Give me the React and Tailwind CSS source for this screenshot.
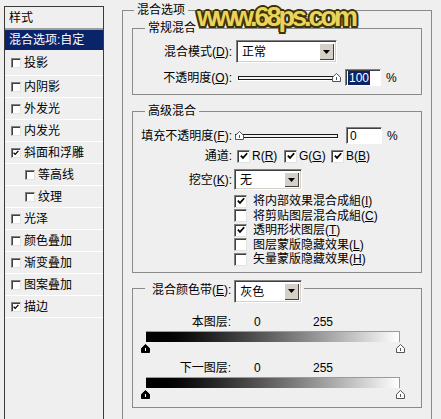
const FONT = "font-['Liberation_Sans','Noto_Sans_CJK_SC',sans-serif]";

const Check = ({ checked, small }) => (
  <span
    className={`inline-flex shrink-0 items-center justify-center bg-white border border-t-[#808080] border-l-[#808080] border-b-[#e2e2e2] border-r-[#e2e2e2] shadow-[inset_1px_1px_0_#404040] ${
      small ? "w-[10px] h-[10px]" : "w-[13px] h-[13px]"
    }`}
  >
    {checked && (
      <svg width={small ? 6 : 8} height={small ? 6 : 8} viewBox="0 0 8 8">
        <path d="M0.8 3.6 L3 5.9 L7.2 1.2" fill="none" stroke="#000" strokeWidth="1.7" />
      </svg>
    )}
  </span>
);

const U = ({ children }) => <span className="underline underline-offset-1">{children}</span>;

const DownArrow = () => (
  <svg width="7" height="4" viewBox="0 0 7 4">
    <path d="M0 0 H7 L3.5 4 Z" fill="#000" />
  </svg>
);

const Select = ({ value, w, h = "h-[23px]", extra = "" }) => (
  <div
    className={`flex shrink-0 ${w} ${h} ${extra} bg-white border border-t-[#808080] border-l-[#808080] border-b-white border-r-white shadow-[inset_1px_1px_0_#404040,inset_-1px_-1px_0_#d4d0c8]`}
  >
    <span className="flex-1 flex items-center pl-[5px] pt-[1px]">{value}</span>
    <span className="m-[2px] w-[15px] flex items-center justify-center bg-[#d4d0c8] shadow-[inset_1px_1px_0_#fff,inset_-1px_-1px_0_#404040]">
      <DownArrow />
    </span>
  </div>
);

const Thumb = ({ dark }) => (
  <svg width="9" height="9" viewBox="0 0 9 9">
    <path
      d="M4.5 0.5 L8.5 4.3 V8.5 H0.5 V4.3 Z"
      fill={dark ? "#000" : "#fff"}
      stroke={dark ? "#000" : "#555"}
      strokeWidth="1"
    />
    <path d="M4.5 4 V7" stroke={dark ? "#fff" : "#555"} strokeWidth="1" />
  </svg>
);

const Slider = ({ w, pos }) => (
  <div className={`relative ${w} h-[17px] flex items-center`}>
    <div className="w-full h-[4px] border border-[#1a1a1a] bg-[#f4f4f4] shadow-[0_1px_0_#fff]" />
    <span className="absolute top-[4px]" style={{ left: pos }}>
      <Thumb />
    </span>
  </div>
);

const NumBox = ({ children }) => (
  <div className="w-[36px] h-[17px] flex items-center pl-[2px] bg-white border border-t-[#808080] border-l-[#808080] border-b-white border-r-white shadow-[inset_1px_1px_0_#404040]">
    {children}
  </div>
);

const LeftRow = ({ label, checked, sub, first }) => (
  <div
    className={`flex items-center border-b border-white ${first ? "h-[26px]" : "h-[22px]"} ${
      sub ? "pl-[20px]" : "pl-[6px]"
    }`}
  >
    <Check small checked={checked} />
    <span className="ml-[3px]">{label}</span>
  </div>
);

const styles = [
  ["投影"],
  ["内阴影"],
  ["外发光"],
  ["内发光"],
  ["斜面和浮雕", true],
  ["等高线", false, true],
  ["纹理", false, true],
  ["光泽"],
  ["颜色叠加"],
  ["渐变叠加"],
  ["图案叠加"],
  ["描边", true],
];

const Bar = () => (
  <>
    <div className="mt-[2px] ml-[13px] w-[254px] h-[11px] bg-linear-to-r from-black to-white border-t border-r border-[#9a9a9a]" />
    <div className="mt-[2px] ml-[8px] w-[264px] h-[8px] flex justify-between">
      <Thumb dark />
      <Thumb />
    </div>
  </>
);

export default function App() {
  return (
    <div className={`relative w-[441px] h-[419px] overflow-hidden bg-[#efefef] flex items-start text-[12px] leading-[14px] text-black ${FONT}`}>
      {/* ── Style list ─────────────────────────── */}
      <div className="mt-[6px] ml-[4px] w-[100px] h-[430px] shrink-0 border border-[#3a3a3a] flex flex-col">
        <div className="h-[21px] flex items-center pl-[4px]">样式</div>
        <div className="h-[2px] bg-[#9d9d9d]" />
        <div className="h-[20px] flex items-center pl-[4px] bg-[#0a246a] text-white">混合选项:自定</div>
        {styles.map(([label, checked, sub], i) => (
          <LeftRow key={label} label={label} checked={checked} sub={sub} first={i === 0} />
        ))}
      </div>

      {/* ── Blending options ───────────────────── */}
      <fieldset className="ml-[18px] mt-[2px] w-[310px] h-[430px] shrink-0 border border-[#8a8a8a] pl-[9px]">
        <legend className="ml-[2px] px-[3px] leading-[16px]">混合选项</legend>

        {/* 常规混合 */}
        <fieldset className="mt-[2px] w-[290px] border border-[#8a8a8a] pb-[8px]">
          <legend className="ml-[12px] px-[3px] leading-[16px]">常规混合</legend>
          <div className="mt-[4px] h-[23px] flex items-center">
            <span className="w-[99px] text-right">混合模式(<U>D</U>):</span>
            <Select value="正常" w="w-[101px]" extra="ml-[4px]" />
          </div>
          <div className="mt-[6px] h-[17px] flex items-center">
            <span className="w-[99px] text-right">不透明度(<U>O</U>):</span>
            <div className="ml-[6px]">
              <Slider w="w-[100px]" pos={94} />
            </div>
            <div className="ml-[7px]">
              <NumBox>
                <span className="bg-[#0a246a] text-white px-[1px]">100</span>
              </NumBox>
            </div>
            <span className="ml-[5px]">%</span>
          </div>
        </fieldset>

        {/* 高级混合 */}
        <fieldset className="mt-[8px] w-[290px] border border-[#8a8a8a] pb-[5px]">
          <legend className="ml-[12px] px-[3px] leading-[16px]">高级混合</legend>
          <div className="mt-[8px] h-[17px] flex items-center">
            <span className="w-[99px] text-right whitespace-nowrap">填充不透明度(<U>F</U>):</span>
            <div className="ml-[3px]">
              <Slider w="w-[103px]" pos={0} />
            </div>
            <div className="ml-[8px]">
              <NumBox>
                <span className="px-[1px]">0</span>
              </NumBox>
            </div>
            <span className="ml-[5px]">%</span>
          </div>
          <div className="mt-[5px] h-[14px] flex items-center">
            <span className="w-[99px] text-right">通道:</span>
            <div className="ml-[5px] flex">
              {["R", "G", "B"].map((c) => (
                <span key={c} className="w-[47px] flex items-center">
                  <Check checked />
                  <span className="ml-[2px]">
                    {c}(<U>{c}</U>)
                  </span>
                </span>
              ))}
            </div>
          </div>
          <div className="mt-[6px] h-[21px] flex items-center">
            <span className="w-[99px] text-right">挖空(<U>K</U>):</span>
            <Select value="无" w="w-[68px]" h="h-[21px]" extra="ml-[2px]" />
          </div>
          <div className="mt-[4px] pl-[101px] flex flex-col">
            {[
              ["将内部效果混合成組", "I", true],
              ["将剪贴图层混合成組", "C", false],
              ["透明形状图层", "T", true],
              ["图层蒙版隐藏效果", "L", false],
              ["矢量蒙版隐藏效果", "H", false],
            ].map(([t, k, c]) => (
              <div key={k} className="h-[14.5px] flex items-center">
                <Check checked={c} />
                <span className="ml-[6px]">
                  {t}(<U>{k}</U>)
                </span>
              </div>
            ))}
          </div>
        </fieldset>

        {/* 混合颜色带 */}
        <fieldset className="mt-[7px] w-[290px] border border-[#8a8a8a] pb-[9px]">
          <legend className="ml-[12px] pl-[7px] pr-[2px] flex items-start">
            <span className="mt-[4px] leading-[13px]">混合颜色带(<U>E</U>):</span>
            <Select value="灰色" w="w-[68px]" extra="ml-[3px] -mb-[6px]" />
          </legend>
          <div className="mt-[18px] h-[14px] flex items-center">
            <span className="w-[98px] text-right">本图层:</span>
            <span className="ml-[23px] w-[59px]">0</span>
            <span>255</span>
          </div>
          <Bar />
          <div className="mt-[9px] h-[14px] flex items-center">
            <span className="w-[98px] text-right">下一图层:</span>
            <span className="ml-[23px] w-[59px]">0</span>
            <span>255</span>
          </div>
          <div className="mt-[1px]" />
          <Bar />
        </fieldset>
      </fieldset>

      {/* watermark over the dialog */}
      <div className="absolute left-[197px] top-[4px] text-[27px] leading-[27px] font-bold tracking-[-3px] text-[#ecd35a] font-['Liberation_Sans',sans-serif] [text-shadow:2px_0_#3d3405,-2px_0_#3d3405,0_2px_#3d3405,0_-2px_#3d3405,1.5px_1.5px_#3d3405,-1.5px_1.5px_#3d3405,1.5px_-1.5px_#3d3405,-1.5px_-1.5px_#3d3405]">
        www.68ps.com
      </div>
    </div>
  );
}
